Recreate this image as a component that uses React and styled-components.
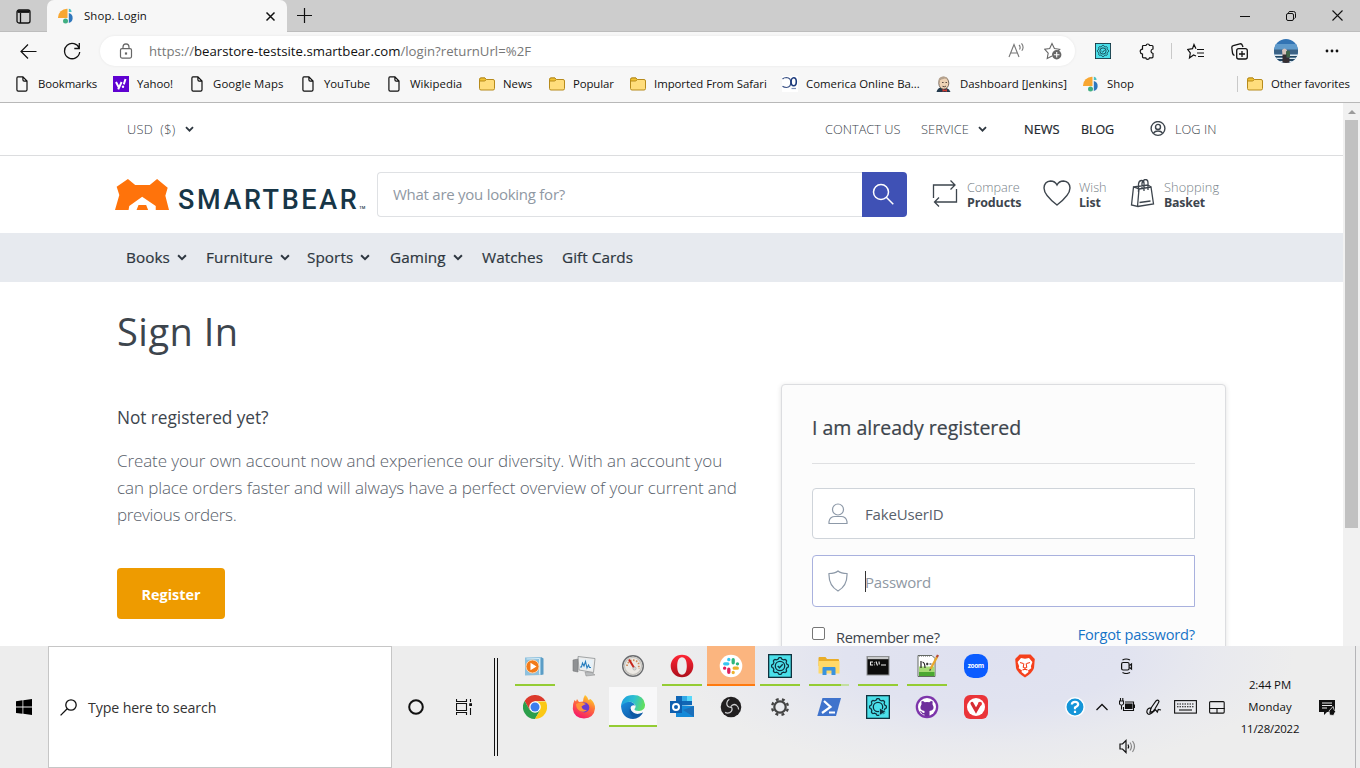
import React from "react";
import styled, { createGlobalStyle } from "styled-components";

const Global = createGlobalStyle`
  *, *::before, *::after { box-sizing: border-box; }
  body { margin: 0; font-family: "Open Sans", "Noto Sans", sans-serif; background: #fff; }
  svg { display: block; flex: none; }
  h1, h2, h3, p { margin: 0; }
`;

const Screen = styled.div`
  width: 1360px;
  height: 768px;
  overflow: hidden;
  display: flex;
  flex-direction: column;
`;

/* ---------- text ---------- */
const Text = styled.span`
  flex: none;
  white-space: nowrap;
  font-size: ${(p) => p.$size || 11.4}px;
  font-weight: ${(p) => p.$weight || 400};
  letter-spacing: ${(p) => p.$track || 0}px;
  color: ${(p) => p.$color || "inherit"};
  padding-bottom: ${(p) => p.$lift || 0}px;
  -webkit-text-stroke: ${(p) => (p.$medium ? "0.2px currentColor" : "0")};
`;

/* ---------- browser chrome ---------- */
const TabStrip = styled.div`
  height: 32px;
  flex: none;
  display: flex;
  background: #cdcdcd;
  box-shadow: inset 0 -1px 0 #bdbdbd;
`;
const TabActions = styled.div`
  width: 47px;
  display: flex;
  align-items: center;
  justify-content: center;
`;
const Tab = styled.div`
  width: 240px;
  height: 32px;
  padding: 0 11px 0 11px;
  display: flex;
  align-items: center;
  gap: 10px;
  background: #f7f7f7;
  border-radius: 7px 7px 0 0;
  color: #111;
`;
const Spacer = styled.div`
  flex: 1;
`;
const WindowButton = styled.div`
  width: 46px;
  height: 31px;
  display: flex;
  align-items: center;
  justify-content: center;
`;
const NewTab = styled(WindowButton)`
  width: 35px;
`;
const AddressRow = styled.div`
  height: 38px;
  flex: none;
  display: flex;
  align-items: center;
  background: #f7f7f7;
`;
const ToolButton = styled.div`
  width: ${(p) => p.$w}px;
  height: 38px;
  flex: none;
  display: flex;
  align-items: center;
  justify-content: center;
`;
const AddressField = styled.div`
  width: 975px;
  height: 30px;
  border-radius: 15px;
  background: #fff;
  box-shadow: 0 0 3px rgba(0, 0, 0, 0.07);
  display: flex;
  align-items: center;
  padding: 0 13px 0 18px;
  color: #777;
  b { font-weight: 400; color: #111; }
`;
const UrlText = styled(Text)`
  margin-left: 15px;
`;
const FieldIcons = styled.div`
  margin-left: auto;
  display: flex;
  gap: 18px;
`;
const Rule = styled.div`
  width: 1px;
  height: 16px;
  background: #c9c9c9;
`;
const BookmarkBar = styled.div`
  height: 33px;
  flex: none;
  display: flex;
  align-items: center;
  padding: 0 0 4px 14px;
  background: #f7f7f7;
  border-bottom: 1px solid #b8b8b8;
`;
const Bookmark = styled.div`
  width: ${(p) => p.$w}px;
  flex: none;
  display: flex;
  align-items: center;
  gap: 8px;
  color: #111;
`;

/* ---------- web page ---------- */
const Viewport = styled.div`
  height: 543px;
  flex: none;
  display: flex;
  overflow: hidden;
`;
const Site = styled.div`
  width: 1343px;
  flex: none;
  background: #fff;
  color: #3d454d;
`;
const Scrollbar = styled.div`
  width: 17px;
  background: #f1f1f1;
  display: flex;
  flex-direction: column;
  align-items: center;
`;
const ScrollArrow = styled.div`
  height: 17px;
  display: flex;
  align-items: center;
`;
const ScrollThumb = styled.div`
  width: 13px;
  height: 408px;
  background: #c1c1c1;
`;
const TopBar = styled.div`
  height: 53px;
  display: flex;
  align-items: center;
  padding-left: 127px;
  border-bottom: 1px solid #dcdddf;
`;
const TopItem = styled.div`
  width: ${(p) => p.$w}px;
  flex: none;
  display: flex;
  align-items: center;
  gap: 9px;
`;
const Header = styled.div`
  height: 77px;
  display: flex;
  align-items: center;
  padding-left: 115px;
`;
const Brand = styled.div`
  width: 262px;
  height: 31px;
  display: flex;
  align-items: flex-start;
  gap: 9px;
`;
const BrandName = styled.span`
  font: 500 27px/32px Roboto, sans-serif;
  letter-spacing: 2.6px;
  color: #173647;
  padding-top: 5px;
  white-space: nowrap;
`;
const Trademark = styled.sup`
  font-size: 4px;
  letter-spacing: 0;
  vertical-align: baseline;
`;
const SearchField = styled.div`
  width: 485px;
  height: 45px;
  border: 1px solid #dfe1e4;
  border-right: 0;
  border-radius: 4px 0 0 4px;
  display: flex;
  align-items: center;
  padding-left: 15px;
`;
const SearchButton = styled.div`
  width: 45px;
  height: 45px;
  border-radius: 0 4px 4px 0;
  background: #3f51b5;
  display: flex;
  align-items: center;
  justify-content: center;
  padding: 0 3px 2px 0;
`;
const ShopLink = styled.div`
  width: ${(p) => p.$w}px;
  height: 60px;
  padding-bottom: 3px;
  display: flex;
  align-items: center;
  gap: 8px;
`;
const Stack = styled.div`
  display: flex;
  flex-direction: column;
  line-height: 15px;
  padding-top: 4px;
`;
const Nav = styled.nav`
  height: 49px;
  background: #e7eaef;
  display: flex;
  align-items: center;
  padding-left: 126px;
  color: #2e3740;
`;
const NavItem = styled.div`
  width: ${(p) => p.$w}px;
  display: flex;
  align-items: center;
  gap: 7px;
`;
const Main = styled.main`
  padding: 21px 117px 0;
`;
const Title = styled.h1`
  font-size: 38px;
  font-weight: 400;
  line-height: 56px;
  letter-spacing: 0.5px;
  color: #3d454d;
`;
const Columns = styled.div`
  margin-top: 25px;
  display: grid;
  grid-template-columns: 664px 445px;
`;
const Intro = styled.div`
  padding-top: 20px;
`;
const SubTitle = styled.h2`
  font-size: 17.3px;
  font-weight: 400;
  line-height: 27px;
  letter-spacing: -0.05px;
`;
const Paragraph = styled.p`
  margin: 16px 0 40px;
  font-size: 17px;
  font-weight: 300;
  line-height: 27px;
  color: #59616b;
  white-space: nowrap;
`;
const Line = styled.span`
  display: block;
  letter-spacing: ${(p) => p.$track}px;
`;
const Register = styled.div`
  width: 108px;
  height: 51px;
  border-radius: 4px;
  background: #ee9b00;
  color: #fff;
  display: flex;
  align-items: center;
  justify-content: center;
  padding-top: 2px;
`;
const Card = styled.section`
  height: 340px;
  border: 1px solid #dcdde0;
  border-radius: 4px;
  background: #fcfcfc;
  box-shadow: 0 1px 5px rgba(0, 0, 0, 0.12);
  padding: 28px 30px;
`;
const CardTitle = styled.h3`
  height: 51px;
  padding-bottom: 20px;
  border-bottom: 1px solid #dfe0e2;
  font-size: 19.5px;
  font-weight: 400;
  -webkit-text-stroke: 0.22px currentColor;
  line-height: 30px;
`;
const Field = styled.div`
  height: ${(p) => p.$h}px;
  margin-top: ${(p) => p.$top}px;
  border: 1px solid ${(p) => (p.$focus ? "#a9b1de" : "#cfd4da")};
  border-radius: 4px 0 0 4px;
  background: #fff;
  display: flex;
  align-items: center;
  padding-left: 15px;
  gap: 17px;
`;
const Placeholder = styled(Text)`
  padding-top: 2px;
`;
const Caret = styled.i`
  width: 1px;
  height: 21px;
  margin-right: -18px;
  background: #333;
`;
const FormFooter = styled.div`
  display: flex;
  align-items: flex-start;
  margin-top: 16px;
  line-height: 22px;
`;
const Checkbox = styled.i`
  width: 13px;
  height: 13px;
  margin: 4px 11px 0 0;
  border: 1px solid #767676;
  border-radius: 2px;
  background: #fff;
`;
const RememberText = styled(Text)`
  margin-top: 3px;
`;

/* ---------- taskbar ---------- */
const Taskbar = styled.div`
  height: 122px;
  flex: none;
  display: flex;
  align-items: center;
  background:
    radial-gradient(ellipse 310px 120px at 985px 8px, #dfe1f0 0%, #e1e3f0 45%, rgba(231, 232, 239, 0.7) 75%, rgba(237, 237, 237, 0) 100%),
    #ededed;
`;
const TaskCell = styled.div`
  width: ${(p) => p.$w}px;
  height: 40px;
  flex: none;
  display: flex;
  align-items: center;
  justify-content: center;
`;
const SearchBox = styled.div`
  width: 344px;
  height: 122px;
  flex: none;
  background: #fff;
  border: 1px solid #c6c6c6;
  display: flex;
  align-items: center;
  gap: 11px;
  padding-left: 11px;
  color: #333;
`;
const Grip = styled.div`
  width: 4px;
  height: 98px;
  margin: 0 13px 0 7px;
  flex: none;
  border: solid #111;
  border-width: 0 1px;
`;
const Apps = styled.div`
  width: 550px;
  height: 122px;
  flex: none;
`;
const AppRow = styled.div`
  display: flex;
  height: 40px;
  margin-bottom: 1px;
`;
const AppSlot = styled.div`
  width: 49px;
  height: 40px;
`;
const Tile = styled.div`
  width: 48px;
  height: 40px;
  display: flex;
  flex-direction: column;
  align-items: center;
  padding-top: 8px;
  background: ${(p) => p.$bg || "transparent"};
`;
const Underline = styled.i`
  width: ${(p) => (p.$wide ? 48 : 40)}px;
  height: 2px;
  margin-top: 6px;
  background: ${(p) => p.$color};
`;
const Tray = styled.div`
  display: flex;
  align-items: center;
  height: 122px;
`;
const TrayColumn = styled.div`
  width: 24px;
  display: flex;
  flex-direction: column;
  align-items: center;
  padding-bottom: 2px;
`;
const Clock = styled.div`
  width: 72px;
  display: flex;
  flex-direction: column;
  align-items: center;
  line-height: 22px;
  color: #111;
`;
const DesktopEdge = styled.div`
  width: 5px;
  height: 122px;
  margin-left: auto;
  border-left: 1px solid #b5b5b8;
`;

/* ---------- icons ---------- */
const Svg = ({ w = 16, h, vb = "0 0 16 16", sw = 1, c = "#111", children }) => (
  <svg width={w} height={h || w} viewBox={vb} fill="none" stroke={c} strokeWidth={sw}>
    {children}
  </svg>
);
const PageIcon = () => (
  <Svg sw={1.2}>
    <path d="M3.900 .900h5l4.100 4.200v8.600q0 1.400-1.400 1.400H4.200q-1.300 0-1.300-1.400V2.200Q2.900 .900 3.900 .900ZM8.900 .900v2.900q0 1.300 1.300 1.300H13" />
  </Svg>
);
const FolderIcon = () => (
  <Svg c="#b78b1c">
    <path fill="#ffdd7c" d="M.5 3.500q0-1.500 1.500-1.500h4l1.500 1.500H14q1.500 0 1.500 1.500v7.500q0 1.500-1.500 1.500H2Q.5 14 .5 12.500Z" />
    <path fill="#f1c232" d="M.6 5V3.500q0-1.500 1.500-1.500H6l1.300 1.500L5.800 5Z" />
  </Svg>
);
const ShopIcon = () => (
  <Svg c="none">
    <path fill="#f8a732" d="M0 10A9 9 0 0 1 9.500.8V10Z" />
    <path fill="#4cc1c4" d="M10.800.7a3.300 3.300 0 0 1 2.800 3.200h-2.800Z" />
    <path fill="#2f77bd" d="M10.800 4.900a5.300 5.300 0 0 1 0 10.200Z" />
    <circle fill="#41af82" cx="7.500" cy="13.100" r="2.500" />
  </Svg>
);
const YahooIcon = () => (
  <Svg c="none">
    <rect width="16" height="16" fill="#5f01d1" />
    <path stroke="#fff" strokeWidth="2" d="M3 6l2.600 5M8.600 6l-3.400 7.300M12.500 3l-1.700 5.400" />
    <circle fill="#fff" cx="10" cy="10.700" r="1.200" />
  </Svg>
);
const ComericaIcon = () => (
  <Svg c="none">
    <rect width="16" height="16" fill="#fff" />
    <path stroke="#3d5487" strokeWidth="1.200" d="M.5 3q1.500-1.500 4-1.500 4.300.4 4.300 5T4.500 11.500q-2.500 0-4-1.200" />
    <ellipse cx="11.700" cy="5.800" rx="2.600" ry="4" stroke="#1c3a7c" strokeWidth="1.600" />
    <path stroke="#7f91b8" strokeWidth="1.200" d="M9.500 12.500H14" />
  </Svg>
);
const JenkinsIcon = () => (
  <Svg c="none">
    <path fill="#243a4c" d="M.5 16q1-4 4-4.500l6 .5q3 1 4 4Z" />
    <ellipse cx="7.800" cy="7.200" rx="5" ry="6" fill="#efd3b5" stroke="#5a4b42" strokeWidth=".8" />
    <path fill="#b5a28e" d="M2.500 7Q1.500 1.500 6.500.6 11.500.5 12.500 4L9 2.500 4.500 3.700Z" />
    <path stroke="#4c3d35" strokeWidth=".9" d="M6 6.500h1.600M9.500 6.500H11M6.500 10.300q2 1 3.500-.2" />
    <path fill="#d33b32" d="M6.500 13l2.300 1 2.200-1v2.700l-2.200-.7-2.300.7Z" />
  </Svg>
);
const gearPath = (cx, cy, r, n, amp) => {
  let d = "";
  for (let i = 0; i <= 96; i++) {
    const a = (i / 96) * Math.PI * 2;
    const q = r + amp * Math.tanh(2.2 * Math.cos(n * a));
    d += `${i ? "L" : "M"}${(cx + q * Math.cos(a)).toFixed(2)} ${(cy + q * Math.sin(a)).toFixed(2)}`;
  }
  return d + "Z";
};
const TestGear = ({ w = 24, play }) => (
  <Svg w={w} vb="0 0 24 24" c="#10323f" sw={1.3}>
    <rect x=".65" y=".65" width="22.700" height="22.700" fill="#4be0ea" />
    <path d={gearPath(12, 12, 7.7, 8, 0.7)} />
    <circle cx="12" cy="12" r="4.700" />
    {play ? <path fill="#10323f" stroke="#4be0ea" strokeWidth=".8" d="M13.500 13l6.500 3.700-6.500 3.700Z" /> : <path d="M9.700 12l1.800 1.800 3.200-3.600" />}
  </Svg>
);
const Chevron = ({ w = 10 }) => (
  <Svg w={w} h={w * 0.7} vb="0 0 10 7" sw={2} c="#2e3740">
    <path d="M1.100 1.300 5 5.200l3.900-3.900" />
  </Svg>
);
const Avatar = () => (
  <Svg w={24} vb="0 0 24 24" c="none">
    <clipPath id="avatar"><circle cx="12" cy="12" r="12" /></clipPath>
    <g clipPath="url(#avatar)">
      <rect width="24" height="24" fill="#3274b4" />
      <rect y="5" width="24" height="6" fill="#5f9acb" />
      <rect y="10.500" width="24" height="5" fill="#3b6285" />
      <path fill="#dfe8ec" d="M0 15.500h24V17H0zm0 3h24V20H0zm2 3.500h20v1.500H2z" />
      <path fill="#244660" d="M0 17h24v1.500H0zm0 3h24v2H0z" />
      <path fill="#d8c3bb" d="M8 11q2.500-3 5 0l-.4 5H8.500Z" />
      <path fill="#41674a" d="M12 12.500q2-2 4 0v6h-4Z" />
      <path fill="#352e32" d="M8.500 15.500h4V24h-4zm4 3h3v5.500h-3z" />
    </g>
  </Svg>
);
const BearLogo = () => (
  <svg width="54" height="31" viewBox="45 222 163 93">
    <path fill="#ff730b" d="M84 222l22 18h44l22-18 32 26-7 24 11 43h-40v-12l-41-28-39 28-2 12H45l13-45-8-25Z" />
    <path fill="#ff730b" d="M116 300h23l6 15h-35Z" />
  </svg>
);

/* application icons, drawn on a 24 unit square */
const A = ({ children }) => (
  <svg width="24" height="24" viewBox="0 0 24 24" fill="none">{children}</svg>
);
const MediaPlayer = () => (
  <A>
    <path fill="#8ec1de" d="M2 3.500 18 3v18L2 21.500Z" />
    <path fill="#5b9dc6" d="M18 3l2.500 1.500v16L18 21Z" />
    <path stroke="#d7eef9" d="M3.500 5 16.500 4.500M16.500 4.500v16" />
    <circle cx="9.500" cy="12.500" r="6.500" fill="#f27a1a" stroke="#fbd3ac" />
    <path fill="#fff" d="M7.500 8.800l6 3.700-6 3.700Z" />
  </A>
);
const Monitor = () => (
  <A>
    <path fill="#8f9193" stroke="#77797b" strokeWidth=".6" d="M1 6l5-1v13l-5-1Z" />
    <path fill="#eceded" stroke="#8d9092" strokeWidth=".8" d="M6 2.500l17 2-1.500 14L7 16Z" />
    <path fill="#e6f1f8" d="M8 5l13 1.200-1 9.800L8.500 14Z" />
    <path stroke="#247cbd" strokeWidth="1.100" d="M8 13h1.500l1-4 1.500 3 1.500-4.500 1.500 6.500 1.500-3 1 2.500h1.500" />
    <path fill="#b9bcbe" stroke="#888" strokeWidth=".5" d="M13 18l7 .5 3 2.500-9 1Z" />
  </A>
);
const Gauge = () => (
  <A>
    <circle cx="12" cy="12" r="10.300" fill="#ece9e4" stroke="#6b6d70" strokeWidth="1.400" />
    <circle cx="12" cy="12" r="8.600" stroke="#c5c3be" strokeWidth="1.300" />
    <path stroke="#cf8e5e" strokeWidth="1.800" strokeDasharray="1.500 1.500" d="M6 12a6.300 6.300 0 0 1 11.500-3l.5 6" />
    <path stroke="#c7251c" strokeWidth="2" d="M8 5.500l5.500 9" />
    <circle cx="13.500" cy="14.500" r="1.600" fill="#d9d9d9" stroke="#999" strokeWidth=".5" />
  </A>
);
const Opera = () => (
  <A>
    <defs><linearGradient id="op" x1="0" y1="0" x2="0" y2="1"><stop stopColor="#ff2635" /><stop offset="1" stopColor="#ad0f1b" /></linearGradient></defs>
    <path fill="url(#op)" fillRule="evenodd" d="M12 .7a11.300 11.300 0 1 0 0 22.600 11.300 11.300 0 1 0 0-22.600Zm0 2.600c3.300 0 4.800 3.700 4.800 8.700S15.300 20.700 12 20.700 7.200 17 7.200 12 8.700 3.300 12 3.300Z" />
  </A>
);
const Slack = () => (
  <A>
    <circle cx="12" cy="12" r="11.300" fill="#fff" />
    <g strokeWidth="3.300" strokeLinecap="round">
      <path stroke="#36c5f0" d="M5.700 9.800H8.800M9.800 5.500v.2" />
      <path stroke="#2eb67d" d="M14.200 5.700V8.800M18.400 9.800h.1" />
      <path stroke="#ecb22e" d="M15.200 14.200h3.100M14.200 18.400v.1" />
      <path stroke="#e01e5a" d="M9.800 15.200v3.100M5.600 14.200h.1" />
    </g>
  </A>
);
const Explorer = () => (
  <A>
    <path fill="#e9ad28" d="M1.500 4q0-1 1-1h6l1.500 2H21q1 0 1 1v6H1.500Z" />
    <path fill="#ffd969" d="M1.500 7h21v12.500h-21Z" />
    <path fill="#3a92dd" d="M5.500 14q0-1 1-1h11q1 0 1 1v7h-4v-4.500h-5V21h-4Z" />
  </A>
);
const Cmd = () => (
  <A>
    <rect x="1" y="2.500" width="22" height="18.500" fill="#0c0c0c" stroke="#8e9092" />
    <path fill="#c9cacb" d="M1.500 3h21v2.200h-21z" />
    <path stroke="#eee" strokeWidth="1.100" d="M7 8H4.500v3H7M8.500 8.500v.8M8.500 10.500v.8M10 7.500l1.500 4M13 7.500l.3 3M15 11h5" />
  </A>
);
const Notepad = () => (
  <A>
    <path fill="#fff" stroke="#646b64" d="M3 1.500h14l3 3v18H3Z" />
    <path fill="#a5dc74" d="M4 12.500h15.500v9.500H4z" />
    <path fill="#4ba832" d="M4 18h15.500v4H4z" />
    <path stroke="#666" strokeWidth="1.200" strokeDasharray="1 1" d="M4 2h12" />
    <path stroke="#222" strokeWidth="1.200" d="M6 7v7M7.500 8q2.500.5 2.500 6M11 10h2.500M12.200 8.800v2.500M14.500 10h2" />
    <path stroke="#e8a72d" strokeWidth="2.300" d="M22 3l-6.500 12" />
    <path stroke="#b64937" strokeWidth="2.300" d="M23 1l-1.200 2.300" />
    <path stroke="#444" strokeWidth="1.200" d="M15.500 15l-.8 1.800" />
  </A>
);
const Zoom = () => (
  <svg width="24" height="24" viewBox="0 0 24 24">
    <rect width="24" height="24" rx="9.500" fill="#0b5cff" />
    <text x="12" y="14" textAnchor="middle" fill="#fff" fontFamily="Open Sans, sans-serif" fontSize="6.500" fontWeight="700" textLength="16.500">zoom</text>
  </svg>
);
const Brave = () => (
  <A>
    <path fill="#f5401c" d="M6.500 .5h11l4.300 4.500-.8 9Q19.500 19 12 23.500 4.500 19 3 14L2.200 5Z" />
    <path fill="#fff" d="M8 4l4 .8 4-.8 3.400 4-1.500 4.200.4 2.100-3.300 2.300.5 1.400L12 20.700 8.500 18l.5-1.400-3.300-2.300.4-2.100L4.600 8Z" />
    <path stroke="#f5401c" strokeWidth="1.100" d="M7 8.500l3.300 1M17 8.500l-3.300 1M10.800 9.500l-.5 3.700 1.700 1 1.700-1-.5-3.700M9.500 16l2.500-.8 2.500.8" />
  </A>
);
const Chrome = () => (
  <A>
    <path fill="#dc3a2c" d="M1.600 6A12 12 0 0 1 22.400 6H12l-5.200 9Z" />
    <path fill="#2c9f4b" d="M1.600 6A12 12 0 0 0 12 24l5.200-9-10.400 0Z" />
    <path fill="#fbc815" d="M22.800 6.500A12 12 0 0 1 12 24l5.200-9L12 6.500Z" />
    <circle cx="12" cy="12" r="5.800" fill="#fff" />
    <circle cx="12" cy="12" r="4.500" fill="#3b7ded" />
  </A>
);
const Firefox = () => (
  <A>
    <defs><linearGradient id="ff" x1=".8" y1="0" x2=".3" y2="1"><stop stopColor="#ffe226" /><stop offset=".45" stopColor="#ff7139" /><stop offset="1" stopColor="#f5156c" /></linearGradient></defs>
    <path fill="url(#ff)" d="M13 0q3 2 3.500 5l2-1q4.800 4 4.500 9.500Q22 23 12 23.500 2 23 .8 14 .5 9 2.500 5L4 6.500 5 4l2 3 4-.5Q11 3 13 0Z" />
    <circle cx="12.300" cy="12.500" r="5" fill="#6a3bd1" />
    <path fill="#ff9438" d="M4 9q5-3 10 0-3 1-4.500 2.500 1 4 5.500 3.500-3 3-7 1-4-2-4-7Z" />
  </A>
);
const Edge = () => (
  <A>
    <defs>
      <linearGradient id="e1" x1="0" y1=".2" x2="1" y2=".4"><stop stopColor="#1b9de2" /><stop offset=".55" stopColor="#2fc2cf" /><stop offset="1" stopColor="#62df5d" /></linearGradient>
      <linearGradient id="e2" x1="0" y1="0" x2=".8" y2="1"><stop stopColor="#1b8fe0" /><stop offset="1" stopColor="#0d54a1" /></linearGradient>
    </defs>
    <path fill="url(#e2)" d="M0 11Q2 6 8 6.500q5 .5 6 4-4-1-4.500 3 .5 5.500 7 5.500 3 0 5.500-1.500Q18.500 24 12 24 1 23.500 0 11Z" />
    <path fill="url(#e1)" d="M0 11.500Q1 0 12 0q11 0 12 9.500.3 6-6 6.500-5 0-4.500-2 2.200-2.500 0-5Q10.500 6 7 7 2 8 0 11.500Z" />
    <path fill="#0c59a4" d="M9 13q-2 6 4 9.500 5 0 9-5-5 2.500-9 .5-3-1.700-4-5Z" />
  </A>
);
const Outlook = () => (
  <A>
    <path fill="#1066b5" d="M6 1h16v9H6z" />
    <path fill="#32a9e7" d="M12 1h5v5h-5z" />
    <path fill="#58d9fb" d="M17 1h5v5h-5z" />
    <path fill="#1489d8" d="M6 10l18 1v11H6Z" />
    <path fill="#1b6fba" d="M24 11v11L13 15Z" />
    <path fill="#0f5faf" d="M0 6h12v12H0z" />
    <circle cx="6" cy="12" r="3" stroke="#fff" strokeWidth="2" />
  </A>
);
const obsArm = "M12 12.500q-4.500-.5-4.200-4.500.3-2.500 2.500-3.800";
const Obs = () => (
  <A>
    <circle cx="12" cy="12" r="10.300" fill="#211f20" />
    <g stroke="#d0d0d2" strokeWidth="1.200">
      {[0, 120, 240].map((r) => <path key={r} transform={`rotate(${r} 12 12)`} d={obsArm} />)}
    </g>
  </A>
);
const Settings = () => (
  <A>
    <circle cx="12" cy="12" r="5.700" stroke="#444" strokeWidth="2.200" />
    <circle cx="12" cy="12" r="7.900" stroke="#444" strokeWidth="2.400" strokeDasharray="2.900 3.305" strokeDashoffset="4.500" />
  </A>
);
const PowerShell = () => (
  <A>
    <path fill="#3f73cc" d="M5.500 3H24l-5 18H.3Z" />
    <path stroke="#fff" strokeWidth="2.200" d="M7 6l6.500 6L5 18M12 17.500h6" />
  </A>
);
const GitHubDesktop = () => (
  <A>
    <circle cx="12" cy="12" r="11.300" fill="#7d35ab" />
    <circle cx="12" cy="12" r="9" fill="#fff" />
    <path fill="#6e2f9c" d="M6.700 6q2 0 3 1.200 2.300-.5 4.600 0Q15.300 6 17.300 6q.7 1.800.1 3 3.300 6-2.900 7v5l-2.500.5-2.500-.5v-1.500q-2.500.3-3.300-2l-1.200-1.500q1.500-.5 2.500 1.500 1 .7 2 .2V16q-6.200-1-2.900-7-.6-1.200.1-3Z" />
  </A>
);
const Vivaldi = () => (
  <A>
    <rect width="24" height="24" rx="6" fill="#ea3439" />
    <circle cx="12" cy="12" r="9" fill="#fff" />
    <path stroke="#d62c33" strokeWidth="3.200" strokeLinecap="round" d="M8 8.500l4 7 3.600-6.300" />
    <circle cx="16" cy="8.700" r="2" fill="#ea3439" />
  </A>
);

const bookmarks = [
  ["Bookmarks", PageIcon, 99, -0.1],
  ["Yahoo!", YahooIcon, 76, -0.1],
  ["Google Maps", PageIcon, 111, 0.1],
  ["YouTube", PageIcon, 86, -0.1],
  ["Wikipedia", PageIcon, 93, 0.05],
  ["News", FolderIcon, 70, 0],
  ["Popular", FolderIcon, 81, -0.1],
  ["Imported From Safari", FolderIcon, 152, -0.05],
  ["Comerica Online Ba...", ComericaIcon, 154, 0],
  ["Dashboard [Jenkins]", JenkinsIcon, 147, 0],
  ["Shop", ShopIcon, 80, 0],
];
const green = "#94cc34";
const appsTop = [
  [MediaPlayer, green], [Monitor], [Gauge], [Opera, green],
  [Slack, "#ff7a0f", "#fbb57f"], [TestGear, green],
  [Explorer, "linear-gradient(90deg, #94cc34 32px, #c3dfa0 32px)"], [Cmd, green],
  [Notepad, green], [Zoom], [Brave],
];
const PlayGear = () => <TestGear play />;
const appsBottom = [
  [Chrome], [Firefox], [Edge, green, "#f8f8f9"], [Outlook], [Obs], [Settings],
  [PowerShell], [PlayGear], [GitHubDesktop], [Vivaldi],
];
const AppButtons = ({ items }) => (
  <AppRow>
    {items.map(([Icon, line, bg], i) => (
      <AppSlot key={i}>
        <Tile $bg={bg}>
          <Icon />
          {line && <Underline $color={line} $wide={!!bg} />}
        </Tile>
      </AppSlot>
    ))}
  </AppRow>
);

export default function App() {
  return (
    <Screen>
      <Global />
      <TabStrip>
        <TabActions>
          <Svg w={15} vb="0 0 15 15" sw={1.3}>
            <rect x="1" y="1" width="13" height="13" rx="2" />
            <path strokeWidth="2.600" d="M1.500 2.600h12" /><path d="M4.500 4v10" />
          </Svg>
        </TabActions>
        <Tab>
          <ShopIcon />
          <Text $lift={2} $track={0.1}>Shop. Login</Text>
          <Spacer />
          <Svg w={11} vb="0 0 11 11" sw={1.5}><path d="M1.500 1.500l8 8m0-8l-8 8" /></Svg>
        </Tab>
        <NewTab><Svg w={15} vb="0 0 15 15" sw={1.2}><path d="M7.500 0v15M0 7.500h15" /></Svg></NewTab>
        <Spacer />
        <WindowButton><Svg w={10} vb="0 0 10 10"><path d="M0 5.500h10" /></Svg></WindowButton>
        <WindowButton>
          <Svg w={10} vb="0 0 10 10"><rect x=".5" y="2.500" width="7" height="7" rx="1.500" /><path d="M2.500 2V1.500q.3-1 1.500-1h3.500q2 0 2 2V6q0 1-1 1.500" /></Svg>
        </WindowButton>
        <WindowButton><Svg w={11} vb="0 0 11 11" sw={1.1}><path d="M.5.5l10 10m0-10l-10 10" /></Svg></WindowButton>
      </TabStrip>
      <AddressRow>
        <ToolButton $w={56}><Svg w={17} vb="0 0 17 17" sw={1.2}><path d="M16.500 8.500H1M8 1.500l-7 7 7 7" /></Svg></ToolButton>
        <ToolButton $w={32}><Svg w={18} vb="0 0 18 18" sw={1.3}><path d="M16.300 6.500A7.600 7.600 0 1 0 16.700 10M16.300 1v5.500h-5" /></Svg></ToolButton>
        <ToolButton $w={12} />
        <AddressField>
          <Svg c="#666" sw={1.2}><rect x="2.500" y="5.600" width="11" height="9.500" rx="1.500" /><path d="M5 5.500V4q0-3 3-3.200Q11 1 11 4v1.500" /><path fill="#666" d="M7.500 10h1v1h-1z" /></Svg>
          <UrlText $size={13.2}>https://<b>bearstore-testsite.smartbear.com</b>/login?returnUrl=%2F</UrlText>
          <FieldIcons>
            <Svg w={18} vb="0 0 18 18" c="#777" sw={1.1}><path d="M1 15l5-12.500 5 12.500M2.800 11h6.300M11 3q2 2 .5 4.500M13.500 1.300q3 3.700.3 7.500" /></Svg>
            <Svg w={18} vb="0 0 18 18" c="#666" sw={1.1}>
              <path d="M8 14l-4.800 2.500 1-5.400L.8 7.300l4.900-.8L8 1.500l2.400 5 5.300.8-1.700 1.700" />
              <circle cx="12.700" cy="12.800" r="4.700" fill="#666" stroke="none" /><path stroke="#fff" d="M12.700 10v5.600M9.900 12.800h5.600" />
            </Svg>
          </FieldIcons>
        </AddressField>
        <ToolButton $w={56}><TestGear w={16} /></ToolButton>
        <ToolButton $w={33}>
          <Svg w={17} vb="0 0 17 17" sw={1.2}><path d="M4.500 2.500H7q.2-1.500 1.800-1.500T10.500 2.500H13q1 0 1 1V6q-2 .5-2 2.200T14 10.500v3.300q0 1-1 1h-2.500q-.3 1.500-1.900 1.500T6.800 14.800H4.500q-1 0-1-1V11Q1.200 10.500 1.200 8.500t2.300-2.300V3.500q0-1 1-1Z" /></Svg>
        </ToolButton>
        <ToolButton $w={15}><Rule /></ToolButton>
        <ToolButton $w={33}>
          <Svg w={17} vb="0 0 17 17" sw={1.2}><path d="M9 13l-2.500-1-4 3 .8-5L.8 6.500l4.700-.8L7 1.500l2 4.200M10 6.500h7M10 10h7M11 13.500h6" /></Svg>
        </ToolButton>
        <ToolButton $w={55}>
          <Svg w={17} vb="0 0 17 17" sw={1.3}><rect x="5.700" y="5.700" width="10.600" height="10.300" rx="2" /><path d="M11 8v6M8 11h6M3.500 12.500Q2 12 1.500 10L.8 4.500Q.8 3 2.300 2.700l6.500-1.900q2-.3 2.500 1.400L12 4" /></Svg>
        </ToolButton>
        <ToolButton $w={38}><Avatar /></ToolButton>
        <ToolButton $w={54}><Svg w={14} h={4} vb="0 0 14 4" c="none"><g fill="#111"><circle cx="2" cy="2" r="1.400" /><circle cx="7" cy="2" r="1.400" /><circle cx="12" cy="2" r="1.400" /></g></Svg></ToolButton>
      </AddressRow>
      <BookmarkBar>
        {bookmarks.map(([label, Icon, w, track]) => (
          <Bookmark key={label} $w={w}><Icon /><Text $lift={2} $track={track}>{label}</Text></Bookmark>
        ))}
        <ToolButton $w={74} /><Rule />
        <ToolButton $w={9} />
        <Bookmark $w={110}><FolderIcon /><Text $lift={2} $track={-0.08}>Other favorites</Text></Bookmark>
      </BookmarkBar>

      <Viewport>
        <Site>
          <TopBar>
            <TopItem $w={698}><Text $size={12.8} $weight={300} $track={0.3}>USD&nbsp; ($)</Text><Chevron w={9} /></TopItem>
            <TopItem $w={96}><Text $size={12.8} $weight={300}>CONTACT US</Text></TopItem>
            <TopItem $w={103}><Text $size={12.8} $weight={300} $track={0.1}>SERVICE</Text><Chevron w={9} /></TopItem>
            <TopItem $w={57}><Text $size={12.8} $medium $color="#22282e">NEWS</Text></TopItem>
            <TopItem $w={69}><Text $size={12.5} $track={-0.1} $medium $color="#22282e">BLOG</Text></TopItem>
            <TopItem $w={80}>
              <Svg sw={1.4} c="#3d454d"><circle cx="8" cy="7.500" r="6.900" /><circle cx="8" cy="5.900" r="2.500" /><path d="M3.500 12q1.500-2 4.500-2t4.500 2" /></Svg>
              <Text $size={12.8} $weight={300}>LOG IN</Text>
            </TopItem>
          </TopBar>
          <Header>
            <Brand><BearLogo /><BrandName>SMARTBEAR<Trademark>TM</Trademark></BrandName></Brand>
            <SearchField><Text $size={15} $track={-0.26} $lift={1} $color="#8f98a3">What are you looking for?</Text></SearchField>
            <SearchButton><Svg w={22} vb="0 0 22 22" c="#fff" sw={1.5}><circle cx="9" cy="9" r="7.500" /><path d="M14.300 14.300l7 7" /></Svg></SearchButton>
            <ToolButton $w={25} />
            <ShopLink $w={111}>
              <Svg w={27} vb="0 0 27 27" c="#3d454d" sw={1.3}><path d="M1.500 18V5h21M18.500.5L23 5l-4.500 4.500M24.500 9v13h-22M7 17.500L2.500 22 7 26.500" /></Svg>
              <Stack><Text $size={12.7} $weight={300} $color="#777f88">Compare</Text><Text $size={12.5} $track={-0.15} $weight={700}>Products</Text></Stack>
            </ShopLink>
            <ShopLink $w={87}>
              <Svg w={28} vb="0 0 28 28" c="#3d454d" sw={1.4}><path d="M14 26Q1 16 1 9q.3-6.500 6.500-7Q12 2 14 6q2-4 6.500-4Q26.700 2.500 27 9q0 7-13 17Z" /></Svg>
              <Stack><Text $size={12.7} $weight={300} $color="#777f88">Wish</Text><Text $size={12.3} $track={-0.1} $weight={700}>List</Text></Stack>
            </ShopLink>
            <ShopLink $w={100}>
              <Svg w={26} h={29} vb="0 0 26 29" c="#3d454d" sw={1.3}><path d="M3.500 8L18 6M3.500 8L1.500 26l6 1.500L9 10ZM9 10l12-2 2.500 17-16 2.500M18 6l3 2M8.500 13V5q.5-3.500 3-3.500T14 4v8M12 9V4q1-3.500 3.500-3.500T18 4v7M9.500 23.500l11-1.500" /></Svg>
              <Stack><Text $size={12.8} $track={0.1} $weight={300} $color="#777f88">Shopping</Text><Text $size={12.3} $track={-0.2} $weight={700}>Basket</Text></Stack>
            </ShopLink>
          </Header>
          <Nav>
            {[["Books", 80, 1], ["Furniture", 101, 1], ["Sports", 83, 1], ["Gaming", 92, 1], ["Watches", 80], ["Gift Cards", 90]].map(([t, w, menu]) => (
              <NavItem key={t} $w={w}><Text $size={15.3} $track={0.05} $lift={2} $medium>{t}</Text>{menu && <Chevron />}</NavItem>
            ))}
          </Nav>
          <Main>
            <Title>Sign In</Title>
            <Columns>
              <Intro>
                <SubTitle>Not registered yet?</SubTitle>
                <Paragraph>
                  <Line $track={-0.105}>Create your own account now and experience our diversity. With an account you</Line>
                  <Line $track={-0.1}>can place orders faster and will always have a perfect overview of your current and</Line>
                  <Line $track={-0.33}>previous orders.</Line>
                </Paragraph>
                <Register><Text $size={14.4} $weight={700}>Register</Text></Register>
              </Intro>
              <Card>
                <CardTitle>I am already registered</CardTitle>
                <Field $h={51} $top={24}>
                  <Svg w={20} h={22} vb="0 0 20 22" c="#8d99a8" sw={1.2}><circle cx="10" cy="6.500" r="5.500" /><path d="M1 20.500v-2q1-5 6-5h6q5 0 6 5v2Z" /></Svg>
                  <Text $size={15} $track={-0.15} $color="#59616b">FakeUserID</Text>
                </Field>
                <Field $h={52} $top={16} $focus>
                  <Svg w={20} h={22} vb="0 0 20 22" c="#8d99a8" sw={1.2}><path d="M10 1q3 2.500 9 2.500.5 12-9 17.500Q.5 15.500 1 3.500 7 3.500 10 1Z" /></Svg>
                  <Caret />
                  <Placeholder $size={15} $track={-0.2} $color="#8f98a3">Password</Placeholder>
                </Field>
                <FormFooter>
                  <Checkbox />
                  <RememberText $size={14.6} $track={-0.3}>Remember me?</RememberText>
                  <Spacer />
                  <Text $size={14.6} $track={-0.18} $color="#1673c7">Forgot password?</Text>
                </FormFooter>
              </Card>
            </Columns>
          </Main>
        </Site>
        <Scrollbar>
          <ScrollArrow><Svg w={8} h={5} vb="0 0 8 5" c="none"><path fill="#9b9b9b" d="M0 5l4-4 4 4Z" /></Svg></ScrollArrow>
          <ScrollThumb />
        </Scrollbar>
      </Viewport>

      <Taskbar>
        <TaskCell $w={48}><Svg c="none"><path fill="#000" d="M0 2.200L6.500 1.300v6.300H0zM7.300 1.200L16 0v7.600H7.300zM0 8.400h6.500v6.400L0 13.900zM7.300 8.400H16V16l-8.700-1.200z" /></Svg></TaskCell>
        <SearchBox>
          <Svg w={17} vb="0 0 17 17" sw={1.3}><circle cx="11" cy="6" r="5.200" /><path d="M7.200 9.800L.6 16.400" /></Svg>
          <Text $size={14.2} $track={-0.12}>Type here to search</Text>
        </SearchBox>
        <TaskCell $w={48}><Svg sw={2}><circle cx="8" cy="8" r="6.800" /></Svg></TaskCell>
        <TaskCell $w={47}><Svg sw={1.1}><path d="M.5 0v2.500h10V0M.5 16v-2.500h10V16M.5 4.500h10v7H.5zM14.500 0v3M14.500 9v7" /><path fill="#111" d="M13.800 4.800h1.700v1.700h-1.700z" /></Svg></TaskCell>
        <Grip />
        <Apps><AppButtons items={appsTop} /><AppButtons items={appsBottom} /></Apps>
        <Tray>
          <TaskCell $w={28}><Svg w={20} vb="0 0 20 20" c="none"><circle cx="10" cy="10" r="9.200" fill="#1495d8" stroke="#fff" strokeWidth="1.500" /><path stroke="#fff" strokeWidth="2.200" d="M6.800 7.500Q7 4.800 10 4.800t3.200 2.500Q13.200 9 10 10.500v1.800M10 13.700v2.300" /></Svg></TaskCell>
          <TaskCell $w={26}><Svg w={12} h={8} vb="0 0 12 8" sw={1.3}><path d="M.5 7L6 1.500 11.500 7" /></Svg></TaskCell>
          <TrayColumn>
            <TaskCell $w={24}><Svg sw={1.2}><rect x="2.600" y="4.500" width="7.500" height="7.500" rx="1.500" /><path d="M10.500 7.500l2-1.500v5l-2-1.500M3.500 2Q7 0 11 2M3.500 14.500q3.500 2 7.500 0" /></Svg></TaskCell>
            <TaskCell $w={24}><Svg sw={1.1}><path fill="#111" d="M6.500 6h6.500v4.500H6.500z" /><path d="M4.500 9V12.500H14.500V4H6M15.500 6.500v3.500M.5 3h4v3q-2 2.500-4 0ZM1.500 0v3M3.800 0v3M2.500 7v4.500" /></Svg></TaskCell>
            <TaskCell $w={24}><Svg w={17} vb="0 0 17 17" sw={1.2}><path d="M1 6h2.500L7 2.500v12L3.500 11H1ZM9 6.500q1.200 2 0 4" /><path stroke="#888" d="M11 4.500q3 4 0 8M13.500 3q4 5.500 0 11" /></Svg></TaskCell>
          </TrayColumn>
          <TaskCell $w={31}><Svg w={17} vb="0 0 17 17" sw={1.2}><path d="M5 9l5-7q2-2 3 .3 0 1-4 7.500l-2 2.500-3 1ZM6 9Q1 8.500.8 13q1 4 5 1t3.500-3.500 2 2.500l1-2.500L15 11" /></Svg></TaskCell>
          <TaskCell $w={30}><Svg w={23} h={14} vb="0 0 23 14" sw={1.1}><rect x=".6" y=".6" width="21.800" height="12.500" /><path strokeDasharray="1.500 1" d="M3 4h17M3 6.700h17" /><path d="M5 10h13" /></Svg></TaskCell>
          <TaskCell $w={34}><Svg w={16} h={13} vb="0 0 16 13" sw={1.1}><rect x=".6" y=".6" width="14.600" height="11.500" rx="1" /><path d="M.6 7.500h15M8 7.500v4.500" /></Svg></TaskCell>
          <Clock><Text $track={-0.05}>2:44 PM</Text><Text $track={0.1}>Monday</Text><Text $track={-0.2}>11/28/2022</Text></Clock>
          <TaskCell $w={42}><Svg w={17} vb="0 0 17 17" c="none"><path fill="#111" d="M0 1h16v12H8l-3 3v-3H0z" /><path stroke="#ededed" d="M3 4h10M3 6.500h10M3 9h5" /><path fill="#111" stroke="#ededed" strokeWidth=".8" d="M10 12l4-4.500 1 3 1.500 2-2 4-4-.5Z" /></Svg></TaskCell>
        </Tray>
        <DesktopEdge />
      </Taskbar>
    </Screen>
  );
}
